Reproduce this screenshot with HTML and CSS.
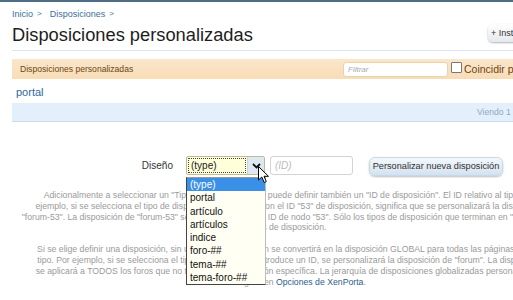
FILE: index.html
```html
<!DOCTYPE html>
<html lang="es">
<head>
<meta charset="utf-8">
<title>Disposiciones personalizadas</title>
<link rel="stylesheet" href="styles.css">
</head>
<body>
<div class="topline"></div>
<div class="page">
  <div class="crumbs"><a class="crumb">Inicio</a><span class="arr">&gt;</span><a class="crumb">Disposiciones</a><span class="arr">&gt;</span></div>
  <div class="titlebar">
    <h1 class="title">Disposiciones personalizadas</h1>
    <span class="topbtn">+ Instalar disposición</span>
  </div>
  <div class="sep"></div>
  <div class="listhead">
    <span class="lh-title">Disposiciones personalizadas</span>
    <span class="filter">
      <input class="filter-input" type="text" placeholder="Filtrar">
      <span class="chk"></span>
      <span class="chk-label">Coincidir prefijo</span>
    </span>
  </div>
  <div class="item"><a class="item-link">portal</a></div>
  <div class="footbar">Viendo 1 de 1 elementos</div>

  <div class="formrow">
    <span class="label">Diseño</span>
    <span class="selectwrap">
      <span class="select">
        <span class="sel-val">(type)</span>
        <span class="sel-arrow"><svg width="9" height="6" viewBox="0 0 9 6"><path d="M1 1 L4.5 4.5 L8 1" fill="none" stroke="#111" stroke-width="1.8"/></svg></span>
      </span>
      <span class="dropdown">
        <span class="opt opt-on">(type)</span>
        <span class="opt">portal</span>
        <span class="opt">artículo</span>
        <span class="opt">artículos</span>
        <span class="opt">indice</span>
        <span class="opt">foro-##</span>
        <span class="opt">tema-##</span>
        <span class="opt">tema-foro-##</span>
      </span>
      <svg class="cursor" width="12" height="18" viewBox="0 0 12 18"><path d="M0.5 0.5 L0.5 14 L3.8 11 L6.2 16.5 L8.3 15.6 L6 10.3 L10.5 10.3 Z" fill="#fff" stroke="#000" stroke-width="1"/></svg>
    </span>
    <input class="idinput" type="text" placeholder="(ID)">
    <span class="btn">Personalizar nueva disposición</span>
  </div>

  <p class="explain">Adicionalmente a seleccionar un "Tipo de disposición", se puede definir también un "ID de disposición". El ID relativo al tipo. Por<br>ejemplo, si se selecciona el tipo de disposición "forum-##" con el ID "53" de disposición, significa que se personalizará la disposición<br>"forum-53". La disposición de "forum-53" se aplicará al foro con ID de nodo "53". Sólo los tipos de disposición que terminan en "-##" utilizan<br>IDs de disposición.</p>
  <p class="explain explain2">Si se elige definir una disposición, sin un ID, esa disposición se convertirá en la disposición GLOBAL para todas las páginas de ese<br>tipo. Por ejemplo, si se selecciona el tipo "forum" y no se introduce un ID, se personalizará la disposición de "forum". La disposición<br>se aplicará a TODOS los foros que no tengan una disposición específica. La jerarquía de disposiciones globalizadas personalizadas<br>se configura en <a class="plink">Opciones de XenPorta</a>.</p>
</div>
</body>
</html>
```
FILE: styles.css
```css
html, body {
  margin: 0;
  padding: 0;
  overflow: hidden;
  background: #fff;
  font-family: "Liberation Sans", Arial, sans-serif;
  color: #333;
}
.topline {
  height: 2px;
  background: #4f6e86;
}
.page {
  width: 556px;
  padding: 0 12px;
}
.crumbs {
  margin-top: 6px;
  height: 12px;
  line-height: 12px;
  font-size: 9px;
  display: flex;
  align-items: center;
}
.crumb { color: #3c6f9c; }
.arr {
  color: #3c6f9c;
  font-size: 8px;
  margin: 0 8px 0 4px;
}
.titlebar {
  display: flex;
  align-items: flex-start;
  padding-top: 4px;
}
.title {
  margin: 0;
  flex: 0 0 476px;
  font-size: 18.3px;
  line-height: 22px;
  font-weight: normal;
  color: #1e1e1e;
}
.topbtn {
  height: 18px;
  line-height: 18px;
  padding: 0 6px 0 3px;
  font-size: 9px;
  color: #333;
  white-space: nowrap;
  border-radius: 5px;
  background: linear-gradient(#ffffff, #e4e9ee);
  box-shadow: 0 1px 2px rgba(0,0,0,0.3);
}
.sep {
  margin-top: 4px;
  height: 1px;
  background: #dbe5ee;
}
.listhead {
  margin-top: 8px;
  height: 20px;
  display: flex;
  align-items: center;
  background: linear-gradient(#fbe6cb, #f8dcb6);
}
.lh-title {
  flex: 0 0 331px;
  padding-left: 8px;
  box-sizing: border-box;
  font-size: 8.6px;
  color: #6a4715;
}
.filter {
  display: flex;
  align-items: center;
  white-space: nowrap;
}
.filter-input {
  width: 105px;
  height: 15px;
  box-sizing: border-box;
  margin: 0;
  padding: 0 4px;
  border: 1px solid #ead2ad;
  border-radius: 3px;
  background: #fff;
  font-family: "Liberation Sans", Arial, sans-serif;
  font-size: 8px;
}
.filter-input::placeholder {
  color: #aaa;
  font-style: italic;
}
.chk {
  width: 11px;
  height: 11px;
  box-sizing: border-box;
  margin-left: 3px;
  margin-top: -3px;
  border: 1px solid #777;
  border-radius: 1px;
  background: #fff;
}
.chk-label {
  margin-left: 2px;
  font-size: 10.5px;
  color: #6a4715;
}
.item {
  height: 24px;
  line-height: 24px;
  padding-left: 4px;
}
.item-link {
  font-size: 11px;
  color: #2e6aa0;
}
.footbar {
  height: 18px;
  line-height: 19px;
  padding-left: 465px;
  background: #e3effa;
  border-bottom: 1px solid #c9dcee;
  font-size: 8.6px;
  color: #8eaac0;
  white-space: nowrap;
}
.formrow {
  margin-top: 34px;
  height: 20px;
  display: flex;
  align-items: flex-start;
}
.label {
  flex: 0 0 161px;
  text-align: right;
  font-size: 10px;
  line-height: 20px;
  color: #333;
}
.selectwrap {
  position: relative;
  margin-left: 13px;
  width: 80px;
}
.select {
  display: flex;
  width: 79px;
  height: 19px;
  box-sizing: border-box;
  border: 1px solid #bcbc90;
  border-radius: 2px;
  background: #ffffd9;
}
.sel-val {
  flex: 1;
  margin: 1px;
  border: 1px dotted #444;
  padding-left: 2px;
  font-size: 10px;
  line-height: 13px;
  color: #222;
}
.sel-arrow {
  width: 16px;
  display: flex;
  align-items: center;
  justify-content: center;
  background: #dde8f3;
  border-left: 1px solid #c7d3df;
}
.dropdown {
  position: absolute;
  left: 0;
  top: 21px;
  width: 80px;
  box-sizing: border-box;
  display: flex;
  flex-direction: column;
  border: 1px solid #444;
  border-top-color: #999;
  border-right-color: #bbb;
  background: #fffff3;
}
.opt {
  height: 13.3px;
  line-height: 13.3px;
  padding-left: 3px;
  font-size: 10px;
  color: #111;
}
.opt-on {
  background: #3a90e6;
  color: #fff;
}
.cursor {
  position: absolute;
  left: 72px;
  top: 10px;
}
.idinput {
  margin: 0 0 0 4px;
  width: 83px;
  height: 19px;
  box-sizing: border-box;
  padding: 0 4px;
  border: 1px solid #d3d3d3;
  border-radius: 3px;
  background: #fff;
  font-family: "Liberation Sans", Arial, sans-serif;
  font-size: 10px;
}
.idinput::placeholder {
  color: #bbb;
  font-style: italic;
}
.btn {
  margin-left: 16px;
  margin-top: 1px;
  width: 134px;
  height: 19px;
  box-sizing: border-box;
  line-height: 17px;
  text-align: center;
  font-size: 9.2px;
  color: #333;
  white-space: nowrap;
  border: 1px solid #c8d8e7;
  border-radius: 6px;
  background: linear-gradient(#f4f8fc, #d3e2f0);
  box-shadow: 0 1px 2px rgba(0,0,0,0.25);
}
.explain {
  margin: 14px 0 0 0;
  text-align: center;
  white-space: nowrap;
  font-size: 8.7px;
  line-height: 10.8px;
  color: #9a9a9a;
}
.explain2 {
  margin-top: 11px;
}
.plink {
  color: #2b5d8a;
}
```
